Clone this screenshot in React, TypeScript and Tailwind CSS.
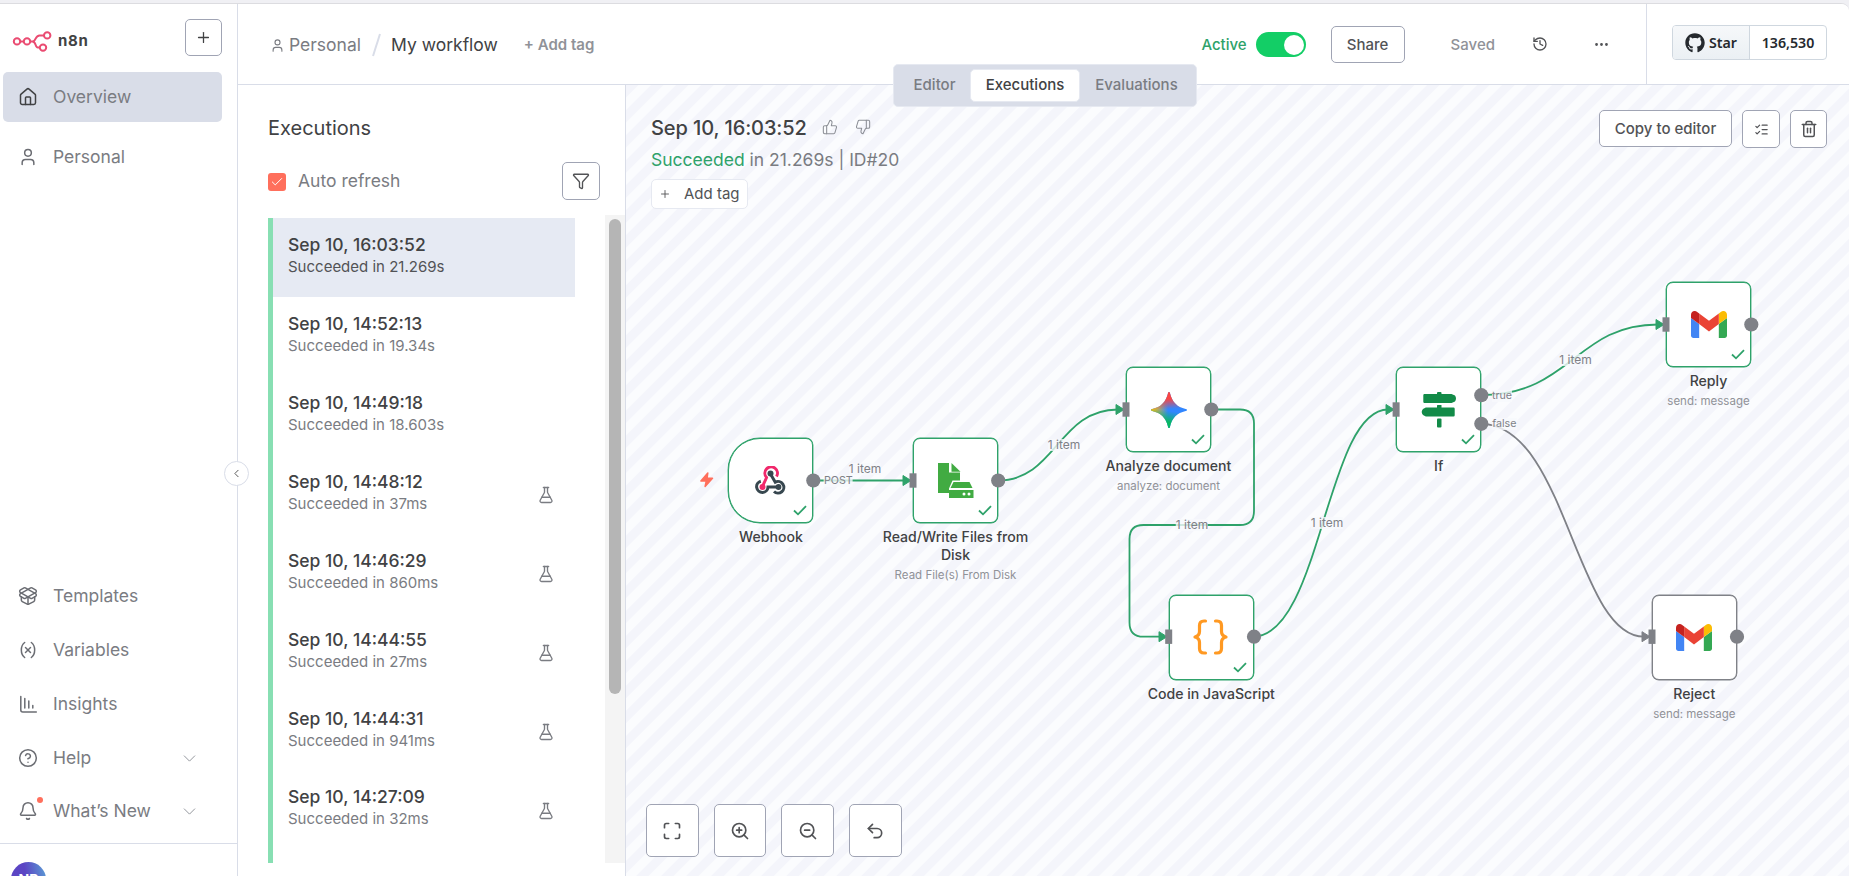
import React from "react";
import {
  Bell, ChevronDown, ChevronLeft, CircleHelp, Ellipsis, FlaskConical, Funnel, History, House,
  ListChecks, Maximize, PackageOpen, Plus, ThumbsDown, ThumbsUp, Trash2, Undo2, User, Variable,
  ZoomIn, ZoomOut, Check,
} from "lucide-react";
import { FaGithub } from "react-icons/fa";

type IconType = React.ComponentType<{ size?: number | string; strokeWidth?: number | string; className?: string }>;

const executions = [
  { time: "Sep 10, 16:03:52", took: "21.269s", test: false },
  { time: "Sep 10, 14:52:13", took: "19.34s", test: false },
  { time: "Sep 10, 14:49:18", took: "18.603s", test: false },
  { time: "Sep 10, 14:48:12", took: "37ms", test: true },
  { time: "Sep 10, 14:46:29", took: "860ms", test: true },
  { time: "Sep 10, 14:44:55", took: "27ms", test: true },
  { time: "Sep 10, 14:44:31", took: "941ms", test: true },
  { time: "Sep 10, 14:27:09", took: "32ms", test: true },
];

function Logo() {
  return (
    <svg width="40" height="22" viewBox="12 30 40 22" fill="none" stroke="#EA4B71" strokeWidth="2">
      <circle cx="17" cy="41.4" r="3.2" />
      <circle cx="27" cy="41.4" r="3.2" />
      <circle cx="47.2" cy="35.4" r="3.2" />
      <circle cx="43" cy="47.6" r="3.2" />
      <path d="M20.2 41.4h3.6M30.2 41.4h2.2c4 0 2.400-6 7.200-6H44M32.400 41.400c4 0 2.400 6.200 5.400 6.200H39.800" />
    </svg>
  );
}

function BarsIcon() {
  return (
    <svg width="19" height="19" viewBox="0 0 19 19" fill="none" stroke="currentColor" strokeWidth="1.5" strokeLinecap="round">
      <path d="M1.800 1.500v13.500a2 2 0 0 0 2 2h13.500M5.800 3.500v9.500M9.800 6v7M13.800 10.500v2.500" />
    </svg>
  );
}

function NavItem({ icon: I, label, active, chevron, dot }: { icon: IconType; label: string; active?: boolean; chevron?: boolean; dot?: boolean }) {
  return (
    <div className={"flex h-[50px] w-[219px] items-center rounded-[5px] pl-[15px] " + (active ? "bg-[#d9dde8] " : "") + (dot ? "-mt-px" : "")}>
      <span className={"relative flex w-5 justify-center " + (active ? "text-[#414244]" : "text-[#6b6d73]")}>
        <I size={20} strokeWidth={1.8} />
        {dot && <span className="absolute -top-1 left-[19px] size-1.5 rounded-full bg-[#ff6f5c]" />}
      </span>
      <span className="ml-[15px] flex-1 text-[17.5px] text-[#7a7c82]">{label}</span>
      {chevron && <ChevronDown size={21} strokeWidth={1.1} className="mr-[22px] text-[#909399]" />}
    </div>
  );
}

function Sidebar() {
  return (
    <aside className="relative flex w-[238px] shrink-0 flex-col border-r border-[#d9dde8] bg-white">
      <div className="flex h-[68px] items-start justify-between pl-3 pr-[15px] pt-[15px]">
        <div className="flex items-center pt-[11px]">
          <Logo />
          <span className="ml-[6px] text-[15px] leading-[22px] font-bold tracking-[0.7px] text-[#414244]">n8n</span>
        </div>
        <button className="flex size-[37px] items-center justify-center rounded-[5px] border border-[#a0a4b4] text-[#414244]">
          <Plus size={17} strokeWidth={1.8} />
        </button>
      </div>
      <nav className="flex flex-col gap-[10px] pl-[3px]">
        <NavItem icon={House} label="Overview" active />
        <NavItem icon={User} label="Personal" />
      </nav>
      <nav className="mt-auto flex flex-col gap-[4px] pb-[7px] pl-[3px]">
        <NavItem icon={PackageOpen} label="Templates" />
        <NavItem icon={Variable} label="Variables" />
        <NavItem icon={BarsIcon} label="Insights" />
        <NavItem icon={CircleHelp} label="Help" chevron />
        <NavItem icon={Bell} label="What’s New" chevron dot />
      </nav>
      <div className="h-[33px] overflow-hidden border-t border-[#d9dde8] pl-[11px] pt-[18px]">
        <div className="flex size-[35px] items-center justify-center rounded-full bg-[linear-gradient(80deg,#5b45c4_45%,#5a8fd2_90%)] text-[14px] font-bold text-white">NR</div>
      </div>
      <button className="absolute -right-[12px] top-[457px] z-20 flex size-[25px] items-center justify-center rounded-full border border-[#d9dde8] bg-white text-[#555]">
        <ChevronLeft size={13} strokeWidth={1.8} />
      </button>
    </aside>
  );
}

function Header() {
  return (
    <header className="relative flex h-[81px] shrink-0 items-center border-b border-[#d9dde8] bg-white">
      <div className="flex flex-1 items-center pl-[32px] pt-[2px]">
        <User size={15} strokeWidth={1.8} className="text-[#7a7c82]" />
        <span className="ml-[4px] text-[17.5px] text-[#7a7c82]">Personal</span>
        <svg width="9" height="24" viewBox="0 0 9 24" className="ml-[11px]" stroke="#d9dde8" strokeWidth="2">
          <path d="M1 23L8 1" />
        </svg>
        <span className="ml-[10px] mt-px text-[17.5px] text-[#414244]">My workflow</span>
        <span className="ml-[26px] text-[15px] font-semibold text-[#909298]">+ Add tag</span>
      </div>
      <div className="flex h-full items-center pr-[36px] pt-[2px]">
        <span className="text-[15px] font-medium text-[#2ea26a]">Active</span>
        <span className="mb-px ml-[9px] flex h-[25px] w-[50px] items-center justify-end rounded-full bg-[#13ce66] pr-[2px]">
          <span className="size-[20px] rounded-full bg-white" />
        </span>
        <button className="mb-px ml-[25px] flex h-[37px] w-[74px] items-center justify-center rounded-[5px] border border-[#a0a4b4] pt-px text-[15px] font-medium text-[#525356]">Share</button>
        <span className="ml-[46px] text-[15px] font-medium text-[#909298]">Saved</span>
        <History size={16} strokeWidth={2} className="mb-[2px] ml-[37px] text-[#525356]" />
        <Ellipsis size={17} strokeWidth={2} className="mb-[2px] ml-[45px] text-[#525356]" />
      </div>
      <div className="flex h-full w-[203px] shrink-0 items-start border-l border-[#d9dde8] pl-[25px] pt-[21px]">
        <div className="flex h-[35px] w-[155px] overflow-hidden rounded-[4px] border border-[#cfd7df] font-['Noto_Sans'] text-[14.2px] font-semibold text-[#25292e]">
          <div className="flex w-[77px] items-center border-r border-[#cfd7df] bg-gradient-to-b from-[#f6f8fa] to-[#ebf0f4] pl-[12px]">
            <FaGithub size={20} />
            <span className="ml-[4px] mt-px">Star</span>
          </div>
          <div className="flex flex-1 items-center justify-center pt-px">136,530</div>
        </div>
      </div>
      <div className="absolute left-[655px] top-[60px] z-10 flex h-[43px] w-[304px] items-center gap-[1px] rounded-[5px] border border-[#e6e9f1] bg-[#d9dde8] px-[4px] text-[15px] font-medium text-[#7a7c82]">
        <span className="w-[71px] pl-[2px] text-center">Editor</span>
        <span className="flex h-[33px] w-[110px] items-center justify-center rounded-[5px] border border-[#e6e9f1] bg-white text-[#414244]">Executions</span>
        <span className="w-[111px] text-center">Evaluations</span>
      </div>
    </header>
  );
}

function ExecutionList() {
  return (
    <section className="flex w-[388px] shrink-0 flex-col border-r border-[#d9dde8] bg-white pl-[30px]">
      <h2 className="mt-[28px] text-[20px] leading-[30px] text-[#414244]">Executions</h2>
      <div className="mt-[19px] flex h-[38px] items-center pr-[25px]">
        <span className="mt-[2px] flex size-[18px] items-center justify-center rounded-[3px] bg-[#ff6f5c] text-white">
          <Check size={14} strokeWidth={1.7} />
        </span>
        <span className="ml-[12px] flex-1 text-[17.5px] text-[#7a7c82]">Auto refresh</span>
        <button className="flex size-[38px] items-center justify-center rounded-[5px] border border-[#a0a4b4] text-[#525356]">
          <Funnel size={18} strokeWidth={1.8} />
        </button>
      </div>
      <div className="mt-[15px] flex h-[648px] justify-between">
        <div className="mt-[3px] h-[645px] w-[307px] overflow-hidden">
          {executions.map((e, i) => (
            <div key={e.time} className={"flex h-[79px] border-l-[5px] border-[#88dfb3] pl-[15px] last:h-[92px] last:pb-px " + (i === 0 ? "bg-[#e6eaf3]" : "")}>
              <div className={"flex-1 " + (i === 7 ? "pt-[15px]" : "pt-[16px]")}>
                <div className="text-[17.5px] leading-[22px] font-medium text-[#414244]">{e.time}</div>
                <div className={"text-[15px] leading-[22px] " + (i === 0 ? "text-[#525356]" : "text-[#7a7c82]")}>Succeeded in {e.took}</div>
              </div>
              {e.test && <FlaskConical size={18} strokeWidth={1.8} className="mr-[20px] mt-[31px] text-[#7a7c82]" />}
            </div>
          ))}
        </div>
        <div className="flex w-[20px] justify-center bg-[#f4f4f4] pt-[4px]">
          <div className="h-[475px] w-[12px] rounded-full bg-[#b5b5b5]" />
        </div>
      </div>
    </section>
  );
}

const WebhookIcon = () => (
  <svg width="31" height="29" viewBox="0 0 31 29" fill="none" strokeWidth="3">
    <path d="M21.500 10.500A6.300 6.300 0 1 0 11.600 11.500L7.500 20.500" stroke="#f0286b" strokeLinejoin="round" />
    <path d="M5.800 15.200A5.700 5.700 0 1 0 13 21H23" stroke="#37474f" />
    <path d="M15.500 8L20.300 16.200A5.800 5.800 0 1 1 19 25.500" stroke="#37474f" />
    <circle cx="15.500" cy="7.500" r="3" fill="#37474f" />
    <circle cx="7.500" cy="21" r="3" fill="#f0286b" />
    <circle cx="23.500" cy="21" r="2.900" fill="#37474f" />
  </svg>
);

const FileIcon = () => (
  <svg width="36" height="36" viewBox="0 0 36 36" fill="#41ab42">
    <path d="M0 0h11v9.500h11v8h-7.500l-3.500 8v4.500H0z" />
    <path d="M13.500 0l9 8.800h-9z" />
    <path d="M15.500 19h16l3 6h-22z" />
    <path fillRule="evenodd" d="M11 27h24.500v8H11zM26 29.500a1.500 1.500 0 1 0 0 3a1.500 1.500 0 1 0 0-3zM31 29.500a1.500 1.500 0 1 0 0 3a1.500 1.500 0 1 0 0-3z" />
  </svg>
);

const GeminiIcon = () => (
  <svg width="36" height="36" viewBox="0 0 36 36">
    <defs>
      <linearGradient id="gy" x1="0" y1="18" x2="20" y2="18" gradientUnits="userSpaceOnUse">
        <stop offset="0.1" stopColor="#fabc12" /><stop offset=".85" stopColor="#fabc12" stopOpacity="0" />
      </linearGradient>
      <linearGradient id="gr" x1="18" y1="0" x2="19" y2="17" gradientUnits="userSpaceOnUse">
        <stop offset="0.400" stopColor="#f94543" /><stop offset="1" stopColor="#f94543" stopOpacity="0" />
      </linearGradient>
      <linearGradient id="gg" x1="16" y1="36" x2="19" y2="19" gradientUnits="userSpaceOnUse">
        <stop offset="0.350" stopColor="#08b962" /><stop offset="1" stopColor="#08b962" stopOpacity="0" />
      </linearGradient>
    </defs>
    {["#3186ff", "url(#gy)", "url(#gg)", "url(#gr)"].map((f) => (
      <path key={f} fill={f} d="M18 0c.7 0 .8.600 1 1.300C21 10 26 15 34.700 17c.7.200 1.300.300 1.300 1s-.6.800-1.300 1C26 21 21 26 19 34.700c-.2.700-.3 1.300-1 1.300s-.8-.6-1-1.300C15 26 10 21 1.300 19C.6 18.800 0 18.700 0 18s.6-.8 1.300-1C10 15 15 10 17 1.300c.2-.7.300-1.300 1-1.300z" />
    ))}
  </svg>
);

const BracesIcon = () => (
  <svg width="36" height="36" viewBox="0.5 0 36 36" fill="none" stroke="#ff9922" strokeWidth="3.200" strokeLinecap="round" strokeLinejoin="round">
    <path d="M13 2h-1.500c-3 0-4.500 1.500-4.500 4.500v6c0 3-1 4.500-4.500 5.500c3.500 1 4.500 2.500 4.500 5.500v6c0 3 1.500 4.500 4.500 4.500H13" />
    <path d="M23 2h1.500c3 0 4.500 1.500 4.500 4.500v6c0 3 1 4.500 4.500 5.500c-3.500 1-4.500 2.500-4.500 5.500v6c0 3-1.500 4.500-4.500 4.500H23" />
  </svg>
);

const SignIcon = () => (
  <svg width="36" height="36" viewBox="0 0 36 36" fill="#128b48">
    <rect x="16" y="0" width="4.500" height="4" rx="1" />
    <path d="M3.500 2H30.500L34 3.500Q36 6.500 34 9.500L30.500 11H3.500a1.200 1.200 0 0 1-1.200-1.200V3.200A1.200 1.200 0 0 1 3.500 2z" />
    <rect x="16" y="13" width="4.500" height="4" rx="0.500" />
    <path d="M4.800 15.500H32.500a1.200 1.200 0 0 1 1.200 1.200v6.600a1.200 1.200 0 0 1-1.200 1.200H4.800L2 23Q-.6 20 2 17z" />
    <rect x="16" y="26.500" width="4.500" height="9" rx="1" />
  </svg>
);

const GmailIcon = () => (
  <svg width="36" height="27" viewBox="52 42 88 66">
    <path fill="#4285f4" d="M58 108h14V74L52 59v43c0 3.320 2.690 6 6 6" />
    <path fill="#34a853" d="M120 108h14c3.320 0 6-2.690 6-6V59l-20 15" />
    <path fill="#fbbc04" d="M120 48v26l20-15v-8c0-7.420-8.470-11.650-14.400-7.200" />
    <path fill="#ea4335" d="M72 74V48l24 18 24-18v26L96 92" />
    <path fill="#c5221f" d="M52 51v8l20 15V48l-5.600-4.200c-5.940-4.450-14.400-.22-14.400 7.200" />
  </svg>
);

interface FlowNode {
  x: number; y: number; name: string; sub?: string; icon: React.ReactNode; trigger?: boolean; idle?: boolean;
}

// Positions are in canvas coordinates; (0, 0) is the canvas' top left corner.
const nodes: FlowNode[] = [
  { x: 102.4, y: 353, name: "Webhook", icon: <WebhookIcon />, trigger: true },
  { x: 287, y: 353, name: "Read/Write Files from Disk", sub: "Read File(s) From Disk", icon: <FileIcon /> },
  { x: 500, y: 282, name: "Analyze document", sub: "analyze: document", icon: <GeminiIcon /> },
  { x: 542.8, y: 509.6, name: "Code in JavaScript", icon: <BracesIcon /> },
  { x: 770.2, y: 282, name: "If", icon: <SignIcon /> },
  { x: 1040, y: 197, name: "Reply", sub: "send: message", icon: <GmailIcon /> },
  { x: 1025.8, y: 509.6, name: "Reject", sub: "send: message", icon: <GmailIcon />, idle: true },
];

const G = "#2ea26a";
const N = "#7f8187";

const edges = [
  { d: "M187 395.500H278", color: G },
  { d: "M372 395.500C430 395.500 432 324.500 492 324.500", color: G },
  { d: "M585 324.500H614Q628 324.500 628 338.500V426Q628 440 614 440H517.500Q503.500 440 503.500 454V537.700Q503.500 551.700 517.500 551.700H534", color: G },
  { d: "M627 551.700C695 551.700 700 324.500 762 324.500", color: G },
  { d: "M855 310C945 310 950 239.500 1032 239.500", color: G },
  { d: "M855 338.800C940 338.800 950 551.700 1018 551.700", color: N },
];

const arrows = [
  { x: 285, y: 395.5, color: G },
  { x: 498, y: 324.5, color: G },
  { x: 541, y: 551.7, color: G },
  { x: 768, y: 324.5, color: G },
  { x: 1038, y: 239.5, color: G },
  { x: 1024, y: 551.7, color: N },
];

const inputs = [[287, 395.5], [500, 324.5], [542.7, 551.7], [770.1, 324.5], [1040, 239.5], [1026, 551.7]];
const outputs = [[187.3, 395.5], [372.2, 395.5], [585.3, 324.5], [628, 551.7], [855.3, 310.2], [855.3, 338.8], [1125.3, 239.5], [1111, 551.7]];

const edgeLabels = [
  { x: 239, y: 384, text: "1 item" },
  { x: 212.3, y: 396, text: "POST", port: true },
  { x: 438, y: 360, text: "1 item" },
  { x: 566, y: 440, text: "1 item" },
  { x: 701, y: 438, text: "1 item" },
  { x: 876, y: 310.5, text: "true", port: true },
  { x: 878.3, y: 339, text: "false", port: true },
  { x: 949.5, y: 275, text: "1 item" },
];

function NodeView({ n }: { n: FlowNode }) {
  return (
    <div className="absolute w-[85px]" style={{ left: n.x, top: n.y }}>
      <div
        className={
          "relative flex size-[85px] items-center justify-center rounded-[7px] border bg-white " +
          (n.trigger ? "rounded-l-[32px] " : "") +
          (n.idle ? "border-[#7f8187] shadow-[0_0_0_0.4px_#7f8187]" : "border-[#2ea26a] shadow-[0_0_0_0.4px_#2ea26a]")
        }
      >
        {n.icon}
        {!n.idle && (
          <svg width="14" height="11" viewBox="0 0 14 11" className="absolute bottom-[6px] right-[5.5px]" fill="none" stroke="#2ea26a" strokeWidth="1.800">
            <path d="M1 5.500L5 9.300L13 1.200" />
          </svg>
        )}
      </div>
      <div className="-mx-[34px] pt-[5px] text-center text-[14.1px] leading-[18px] font-medium text-[#414244]">{n.name}</div>
      {n.sub && <div className="-mx-[40px] mt-[3.4px] text-center text-[11.5px] leading-[16px] text-[#909298]">{n.sub}</div>}
    </div>
  );
}

function Canvas() {
  return (
    <main className="relative flex flex-1 flex-col justify-between overflow-hidden bg-[#fbfcfe]">
      <svg width="1223" height="791" className="absolute left-0 top-0">
        <defs>
          <pattern id="stripes" width="17.700" height="17.700" patternUnits="userSpaceOnUse" patternTransform="rotate(45)">
            <rect width="8.850" height="17.700" fill="#f4f5fb" />
          </pattern>
        </defs>
        <rect width="1223" height="791" fill="url(#stripes)" />
        {edges.map((e) => <path key={e.d} d={e.d} fill="none" stroke={e.color} strokeWidth="1.800" />)}
      </svg>
      {nodes.map((n) => <NodeView key={n.name} n={n} />)}
      <svg width="1223" height="791" className="absolute left-0 top-0">
        {arrows.map((a) => (
          <path key={a.x} d={`M${a.x - 8} ${a.y - 5}L${a.x} ${a.y}L${a.x - 8} ${a.y + 5}z`} fill={a.color} stroke={a.color} strokeLinejoin="round" />
        ))}
        {inputs.map(([x, y]) => <rect key={x} x={x - 3.5} y={y - 7.2} width="7" height="14.400" fill={N} />)}
        {outputs.map(([x, y]) => <circle key={`${x}-${y}`} cx={x} cy={y} r="7.100" fill={N} />)}
        <path d="M81.800 388L74.900 396h5.400L79.100 401.500L86.500 393.200H81.100z" fill="#ff6f5c" stroke="#ff6f5c" strokeLinejoin="round" strokeWidth="1.500" />
      </svg>
      {edgeLabels.map((l) => (
        <span
          key={`${l.x}`}
          className={"absolute -translate-x-1/2 -translate-y-1/2 bg-[#f8f9fd]/80 leading-[12px] whitespace-nowrap text-[#7f8187] " + (l.port ? "text-[10.7px]" : "text-[12px]")}
          style={{ left: l.x, top: l.y }}
        >
          {l.text}
        </span>
      ))}
      <div className="relative flex justify-between pl-[25px] pr-[22px] pt-[25px]">
        <div>
          <div className="flex items-center text-[#8d9097]">
            <span className="text-[20px] leading-[36px] font-medium tracking-[-0.1px] text-[#414244]">Sep 10, 16:03:52</span>
            <ThumbsUp size={16} strokeWidth={1.6} className="mb-[2px] ml-[15px]" />
            <ThumbsDown size={16} strokeWidth={1.6} className="mb-[2px] ml-[17px]" />
          </div>
          <div className="text-[17.5px] leading-[28px] text-[#7a7c82]"><span className="text-[#2ea26a]">Succeeded</span> in 21.269s | ID#20</div>
          <button className="mt-[5px] flex h-[30px] w-[97px] items-center rounded-[5px] border border-[#e6e9f1] bg-white pl-[7px] text-[15px] text-[#525356]">
            <Plus size={12} strokeWidth={1.8} />
            <span className="ml-[13px] whitespace-nowrap">Add tag</span>
          </button>
        </div>
        <div className="flex gap-[10px] text-[#525356]">
          <button className="h-[37px] w-[133px] rounded-[5px] border border-[#a0a4b4] bg-white pt-px text-[15px] font-medium">Copy to editor</button>
          <button className="flex size-[38px] items-center justify-center rounded-[5px] border border-[#a0a4b4] bg-white"><ListChecks size={15} strokeWidth={2} /></button>
          <button className="flex h-[38px] w-[37px] items-center justify-center rounded-[5px] border border-[#a0a4b4] bg-white"><Trash2 size={18} strokeWidth={2} /></button>
        </div>
      </div>
      <div className="relative flex gap-[14.9px] pb-[19px] pl-[20px] text-[#525356]">
        {[Maximize, ZoomIn, ZoomOut, Undo2].map((I, i) => (
          <button key={i} className="flex h-[53px] w-[52.8px] items-center justify-center rounded-[5px] border border-[#a0a4b4] bg-white"><I size={20} strokeWidth={2} /></button>
        ))}
      </div>
    </main>
  );
}

export default function App() {
  return (
    <div className="flex h-[876px] w-[1849px] flex-col overflow-hidden bg-[#f0f0f4] pt-[3px] font-['Inter',sans-serif]">
      <div className="flex min-h-0 flex-1 overflow-hidden rounded-tr-[8px] border-t border-[#dcdce0] bg-white">
        <Sidebar />
        <div className="flex min-w-0 flex-1 flex-col">
          <Header />
          <div className="flex min-h-0 flex-1">
            <ExecutionList />
            <Canvas />
          </div>
        </div>
      </div>
    </div>
  );
}
